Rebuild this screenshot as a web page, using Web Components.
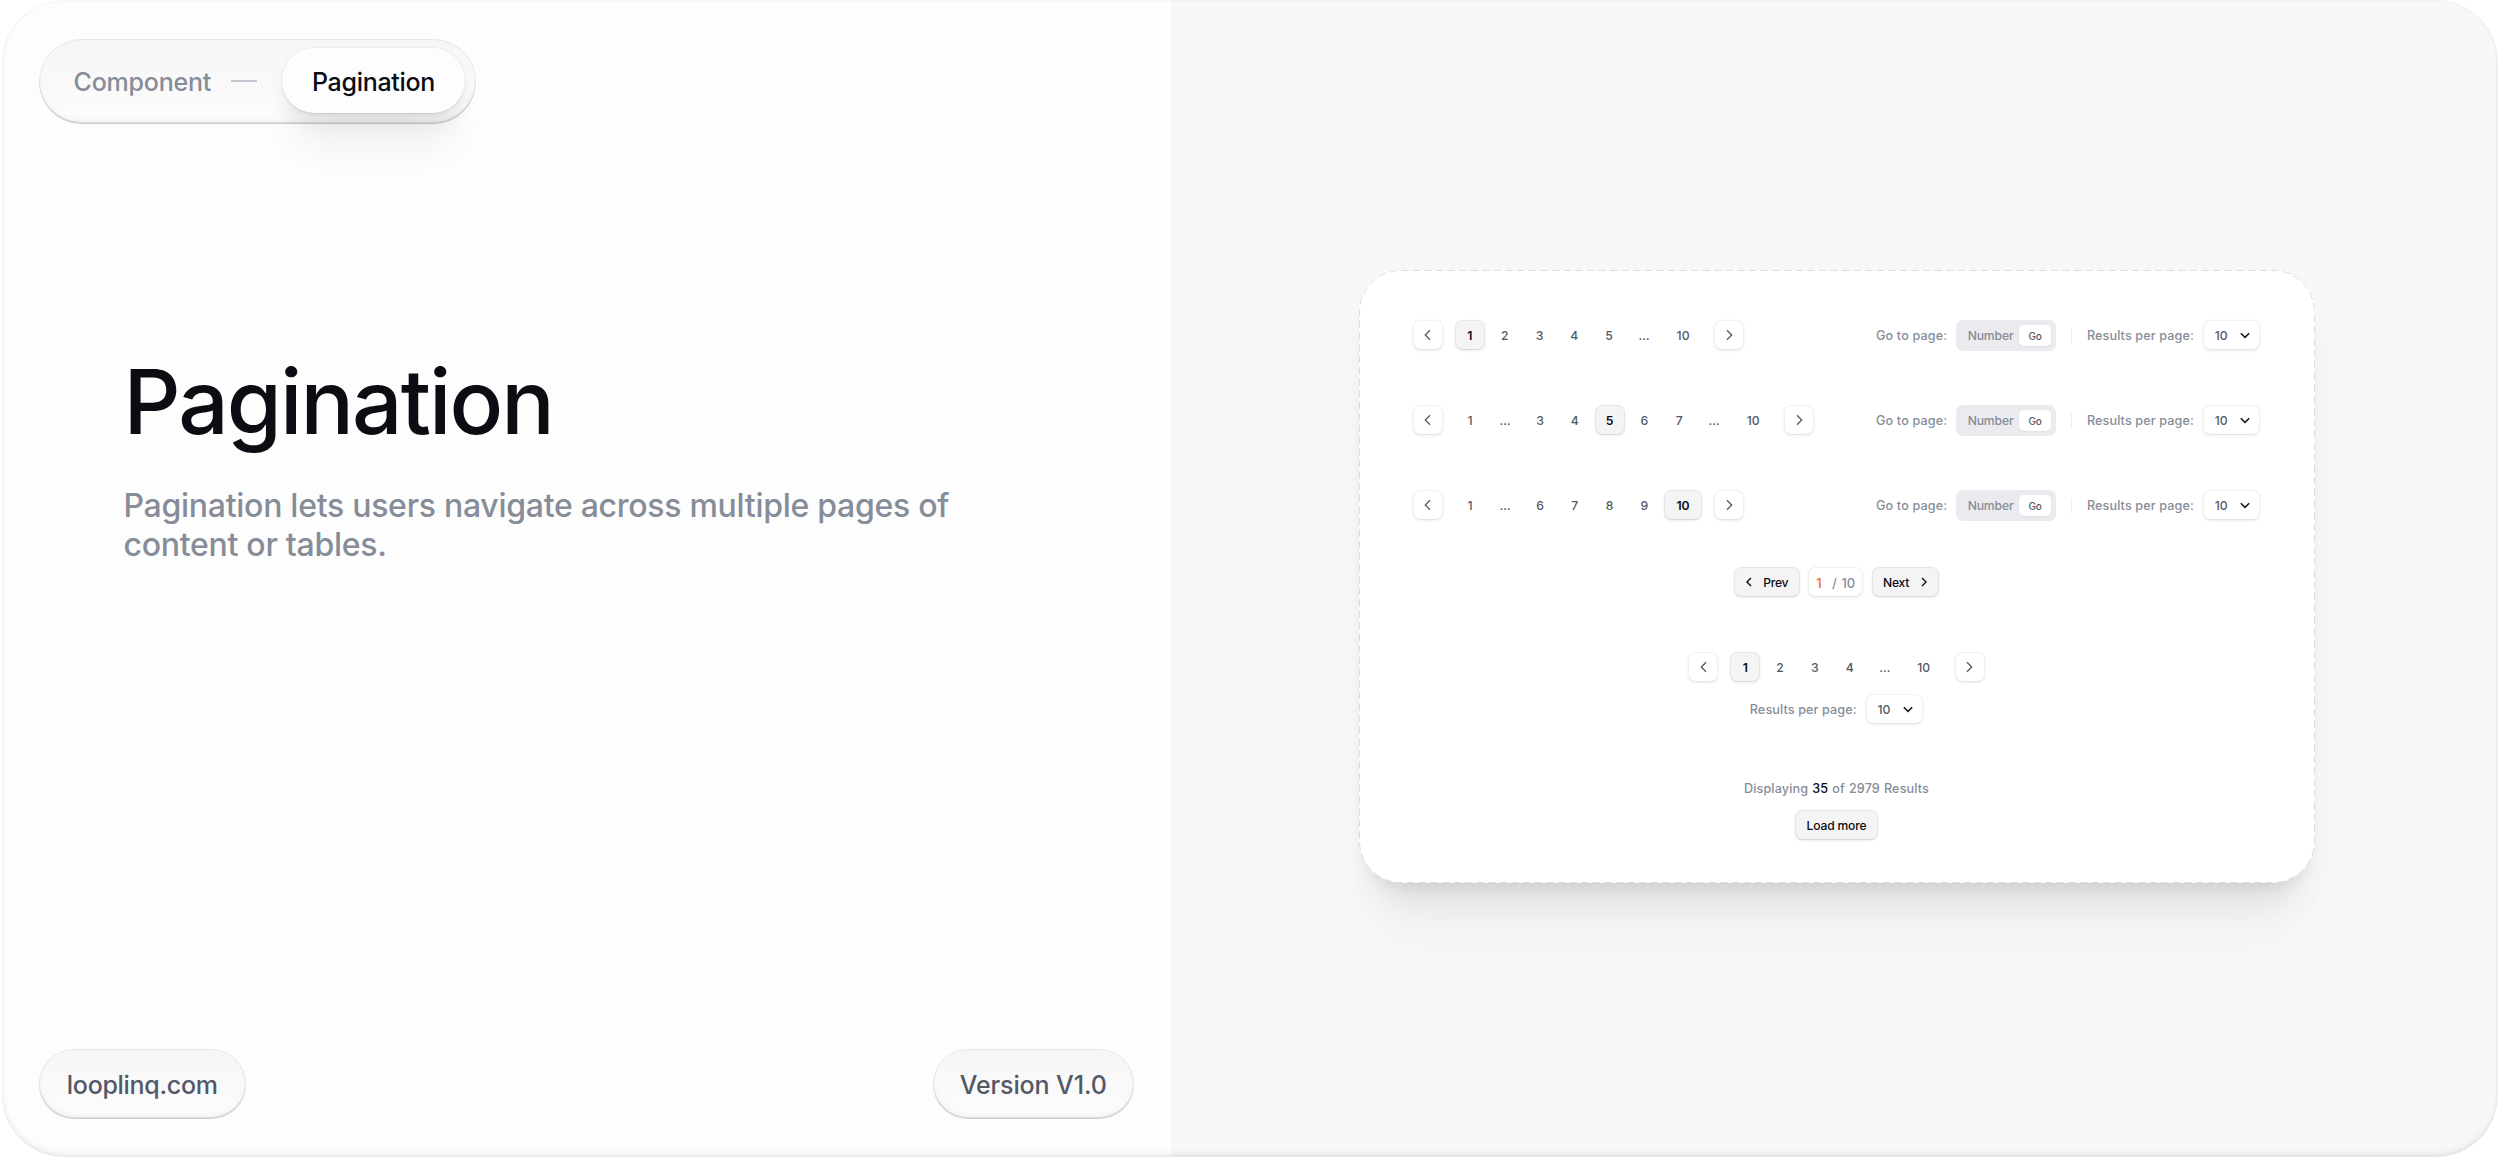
<!DOCTYPE html>
<html lang="en">
<head>
<meta charset="utf-8">
<title>Pagination</title>
<style>
    html, body {
        margin: 0;
        height: 100%;
        background: #fff;
    }
    body {
        font-family: Inter, "Liberation Sans", sans-serif;
        font-weight: 500;
        overflow: hidden;
    }
</style>
</head>
<body>
<doc-cover>
    <doc-intro slot="intro">
        <crumb-pill slot="top">
            <span slot="parent">Component</span>
            <span slot="current">Pagination</span>
        </crumb-pill>
        <span slot="title">Pagination</span>
        <span slot="text">Pagination lets users navigate across multiple pages of content or tables.</span>
        <soft-pill slot="bottom" style="--w: 206.5px; --ls: -0.3px">looplinq.com</soft-pill>
        <soft-pill slot="bottom" style="--w: 201.5px; --ls: -0.1px">Version V1.0</soft-pill>
    </doc-intro>
    <preview-card>
        <split-row>
            <page-nav pages="1 2 3 4 5 ... 10" current="1"></page-nav>
            <page-tools slot="end"></page-tools>
        </split-row>
        <split-row>
            <page-nav pages="1 ... 3 4 5 6 7 ... 10" current="5"></page-nav>
            <page-tools slot="end"></page-tools>
        </split-row>
        <split-row>
            <page-nav pages="1 ... 6 7 8 9 10" current="10"></page-nav>
            <page-tools slot="end"></page-tools>
        </split-row>
        <step-nav current="1" total="10"></step-nav>
        <page-nav class="centered" pages="1 2 3 4 ... 10" current="1"></page-nav>
        <per-page class="below"></per-page>
        <load-more shown="35" total="2979"></load-more>
    </preview-card>
</doc-cover>

<script>
// attaches an open shadow root filled with the given markup
function render(el, html) {
    const template = document.createElement('template');
    template.innerHTML = html;
    el.attachShadow({ mode: 'open' });
    el.shadowRoot.appendChild(template.content.cloneNode(true));
}

class DocCover extends HTMLElement {
    constructor() {
        super();
        render(this, `
            <style>
                :host {
                    display: block;
                    box-sizing: border-box;
                    width: 2500px;
                    height: 1159px;
                    padding: 0 2px 2px;
                }
                .frame {
                    position: relative;
                    display: grid;
                    grid-template-columns: 1169px 1fr;
                    height: 1157px;
                    border-radius: 62px;
                    overflow: hidden;
                    background: #f7f7f8;
                }
                /* the rim shading lies over both halves */
                .frame::after {
                    content: "";
                    position: absolute;
                    inset: 0;
                    border-radius: inherit;
                    box-shadow: inset 0 0 3px rgba(0, 0, 0, 0.07), inset 0 -4px 6px -1px rgba(0, 0, 0, 0.08);
                    pointer-events: none;
                }
                .stage {
                    display: flex;
                    align-items: flex-start;
                    padding: 270px 0 0 187.5px;
                }
            </style>
            <div class="frame">
                <slot name="intro"></slot>
                <div class="stage"><slot></slot></div>
            </div>
        `);
    }
}

class DocIntro extends HTMLElement {
    constructor() {
        super();
        render(this, `
            <style>
                :host {
                    display: flex;
                    flex-direction: column;
                    box-sizing: border-box;
                    height: 1157px;
                    padding: 39px 37px 38px;
                    background: #fdfdfd;
                }
                .top {
                    display: flex;
                }
                .copy {
                    flex: 1;
                    padding: 224px 0 0 84.5px;
                }
                h1 {
                    margin: 0;
                    color: #0b0d12;
                    font-size: 89px;
                    line-height: 108px;
                    font-weight: 500;
                    letter-spacing: -1.95px;
                }
                p {
                    margin: 31px 0 0;
                    width: 860px;
                    color: #868c98;
                    font-size: 32px;
                    line-height: 38.5px;
                    font-weight: 450;
                    letter-spacing: -0.28px;
                }
                .bottom {
                    display: flex;
                    justify-content: space-between;
                }
            </style>
            <div class="top"><slot name="top"></slot></div>
            <div class="copy">
                <h1><slot name="title"></slot></h1>
                <p><slot name="text"></slot></p>
            </div>
            <div class="bottom"><slot name="bottom"></slot></div>
        `);
    }
}

const PILL = `
    background: linear-gradient(#f6f6f7, #fcfcfc);
    box-shadow: inset 0 0 0 1px rgba(0, 0, 0, 0.06), inset 0 -2px 1px rgba(0, 0, 0, 0.1), inset 0 -5px 6px -2px rgba(0, 0, 0, 0.05);
`;

class CrumbPill extends HTMLElement {
    constructor() {
        super();
        render(this, `
            <style>
                :host {
                    display: flex;
                    align-items: center;
                    box-sizing: border-box;
                    width: 437px;
                    height: 85px;
                    padding: 0 11px 0 34.5px;
                    border-radius: 43px;
                    font-size: 25px;
                    ${PILL}
                }
                .parent {
                    width: 157.5px;
                    padding-top: 1px;
                    color: #868c98;
                    letter-spacing: -0.2px;
                }
                .dash {
                    width: 26px;
                    height: 2px;
                    margin-bottom: 1px;
                    background: #c3c8d0;
                }
                .current {
                    display: flex;
                    align-items: center;
                    justify-content: center;
                    box-sizing: border-box;
                    width: 183px;
                    height: 65px;
                    padding-top: 2px;
                    margin-left: auto;
                    margin-bottom: 2px;
                    border-radius: 33px;
                    background: #fdfdfd;
                    color: #0b0d12;
                    letter-spacing: -0.3px;
                    box-shadow: 0 0 0 1px rgba(0, 0, 0, 0.04), 0 3px 4px -1px rgba(0, 0, 0, 0.06), 0 14px 20px -4px rgba(0, 0, 0, 0.08), 0 44px 36px -10px rgba(0, 0, 0, 0.05);
                }
            </style>
            <span class="parent"><slot name="parent"></slot></span>
            <span class="dash"></span>
            <span class="current"><slot name="current"></slot></span>
        `);
    }
}

class SoftPill extends HTMLElement {
    constructor() {
        super();
        render(this, `
            <style>
                :host {
                    display: flex;
                    align-items: center;
                    justify-content: center;
                    box-sizing: border-box;
                    width: var(--w);
                    height: 70px;
                    padding-top: 1px;
                    border-radius: 35px;
                    color: #525866;
                    font-size: 25px;
                    letter-spacing: var(--ls);
                    ${PILL}
                }
            </style>
            <slot></slot>
        `);
    }
}

class PreviewCard extends HTMLElement {
    constructor() {
        super();
        render(this, `
            <style>
                :host {
                    position: relative;
                    display: flex;
                    flex-direction: column;
                    box-sizing: border-box;
                    width: 956px;
                    height: 613px;
                    padding: 50.4px 54.1px 0;
                    border-radius: 42px;
                    background: #fff;
                    color: #525866;
                    font-size: 12px;
                    box-shadow: 0 12px 16px -10px rgba(0, 0, 0, 0.09), 0 30px 36px -16px rgba(0, 0, 0, 0.09), 0 70px 50px -24px rgba(0, 0, 0, 0.03);
                }
                .outline {
                    position: absolute;
                    inset: 0;
                    fill: none;
                    stroke: #dcdddf;
                    stroke-dasharray: 7.6 4;
                }
                ::slotted(split-row) {
                    margin-bottom: 54.8px;
                }
                ::slotted(step-nav) {
                    margin: -7.9px 0 54.8px;
                }
                ::slotted(.centered) {
                    align-self: center;
                }
                ::slotted(.below) {
                    align-self: center;
                    margin-top: 11.8px;
                }
                ::slotted(load-more) {
                    margin-top: 55px;
                }
            </style>
            <svg class="outline" width="956" height="613">
                <rect x="0.5" y="0.5" width="955" height="612" rx="41.5"></rect>
            </svg>
            <slot></slot>
        `);
    }
}

class SplitRow extends HTMLElement {
    constructor() {
        super();
        render(this, `
            <style>
                :host {
                    display: flex;
                    justify-content: space-between;
                    height: 30.1px;
                }
            </style>
            <slot></slot>
            <slot name="end"></slot>
        `);
    }
}

const BOX = `
    border-radius: 7.5px;
    background: #fff;
    box-shadow: inset 0 0 0 1px rgba(0, 0, 0, 0.055), inset 0 -1px 0 rgba(0, 0, 0, 0.05), 0 1px 3px rgba(0, 0, 0, 0.07);
`;
const BOX_FILLED = `
    border-radius: 7.5px;
    background: #f4f4f4;
    color: #0b0d12;
    box-shadow: inset 0 0 0 1px rgba(0, 0, 0, 0.055), inset 0 -1px 0 rgba(0, 0, 0, 0.05), 0 1px 3px rgba(0, 0, 0, 0.07);
`;

const arrow = (dir) => `
    <svg width="7" height="12" viewBox="0 0 7 12" fill="none" stroke="currentColor" stroke-width="1.3">
        <path d="${dir === 'left' ? 'M6 1.3 L1.3 6 L6 10.7' : 'M1 1.3 L5.7 6 L1 10.7'}"></path>
    </svg>`;

const smallArrow = (dir) => `
    <svg width="6" height="10" viewBox="0 0 6 10" fill="none" stroke="currentColor" stroke-width="1.4">
        <path d="${dir === 'left' ? 'M5 0.9 L0.9 5 L5 9.1' : 'M1 0.9 L5.1 5 L1 9.1'}"></path>
    </svg>`;

class PageNav extends HTMLElement {
    constructor() {
        super();
        const current = this.getAttribute('current');
        const cells = this.getAttribute('pages').split(' ').map((page) => {
            if (page === '...') return '<span class="cell gap">…</span>';
            const cls = (page === current ? ' on' : '') + (page.length > 1 ? ' wide' : '');
            return `<span class="cell${cls}">${page}</span>`;
        }).join('');
        render(this, `
            <style>
                :host {
                    display: flex;
                    gap: 12.2px;
                    height: 30.1px;
                    font-size: 12.2px;
                }
                .step, .cell {
                    display: flex;
                    align-items: center;
                    justify-content: center;
                    box-sizing: border-box;
                    width: 30.1px;
                    height: 30.1px;
                }
                .step {
                    ${BOX}
                }
                .cell {
                    padding-top: 1px;
                }
                .pages {
                    display: flex;
                    gap: 4.7px;
                }
                .gap {
                    width: 30.6px;
                }
                .wide {
                    width: 38px;
                }
                .on {
                    font-weight: 600;
                    ${BOX_FILLED}
                }
            </style>
            <span class="step">${arrow('left')}</span>
            <div class="pages">${cells}</div>
            <span class="step">${arrow('right')}</span>
        `);
    }
}

class PageTools extends HTMLElement {
    constructor() {
        super();
        render(this, `
            <style>
                :host {
                    display: flex;
                    align-items: center;
                    height: 30.1px;
                    color: #868c98;
                    font-size: 12.6px;
                    font-weight: 450;
                }
                .label {
                    width: 80px;
                    padding-top: 1px;
                    letter-spacing: 0.15px;
                    white-space: nowrap;
                }
                .field {
                    display: flex;
                    align-items: center;
                    justify-content: space-between;
                    box-sizing: border-box;
                    width: 99.7px;
                    height: 30.6px;
                    padding: 0 4.7px 0 11.6px;
                    border-radius: 7px;
                    background: #ebebef;
                    font-size: 12.2px;
                    font-weight: 500;
                    letter-spacing: -0.15px;
                }
                .field > span:first-child {
                    padding-top: 1px;
                }
                .go {
                    display: flex;
                    align-items: center;
                    justify-content: center;
                    box-sizing: border-box;
                    width: 32px;
                    height: 21px;
                    padding-top: 1px;
                    border-radius: 5px;
                    background: #fff;
                    color: #525866;
                    font-size: 10px;
                    box-shadow: 0 1px 2px rgba(0, 0, 0, 0.05);
                }
                .rule {
                    width: 1px;
                    height: 15px;
                    margin: 0 15px 0 15.2px;
                    background: #eeeef0;
                }
            </style>
            <span class="label">Go to page:</span>
            <div class="field"><span>Number</span><span class="go">Go</span></div>
            <span class="rule"></span>
            <per-page></per-page>
        `);
    }
}

class PerPage extends HTMLElement {
    constructor() {
        super();
        render(this, `
            <style>
                :host {
                    display: flex;
                    align-items: center;
                    height: 30.1px;
                    color: #868c98;
                    font-size: 12.6px;
                    font-weight: 450;
                }
                .label {
                    width: 116.5px;
                    padding-top: 1px;
                    letter-spacing: 0.12px;
                    white-space: nowrap;
                }
                .select {
                    display: flex;
                    align-items: center;
                    justify-content: space-between;
                    box-sizing: border-box;
                    width: 57px;
                    height: 30.1px;
                    padding: 1px 10px 0 11.3px;
                    color: #525866;
                    font-size: 12.2px;
                    font-weight: 500;
                    ${BOX}
                }
            </style>
            <span class="label">Results per page:</span>
            <div class="select">
                <span>10</span>
                <svg width="10" height="7" viewBox="0 0 10 7" fill="none" stroke="#15171c" stroke-width="1.5">
                    <path d="M0.8 1.2 L5 5.4 L9.2 1.2"></path>
                </svg>
            </div>
        `);
    }
}

class StepNav extends HTMLElement {
    constructor() {
        super();
        render(this, `
            <style>
                :host {
                    display: flex;
                    justify-content: center;
                    gap: 8.4px;
                    height: 30.1px;
                }
                .btn, .count {
                    display: flex;
                    align-items: center;
                    justify-content: space-between;
                    box-sizing: border-box;
                    height: 30.1px;
                }
                .btn {
                    font-weight: 550;
                    font-size: 12.1px;
                    letter-spacing: -0.2px;
                    ${BOX_FILLED}
                }
                .btn span {
                    padding-top: 1px;
                }
                .prev {
                    width: 65.7px;
                    padding: 0 11.5px 0 11.5px;
                }
                .next {
                    width: 67.2px;
                    padding: 0 11.5px 0 11.3px;
                }
                .count {
                    width: 55px;
                    padding: 1px 8px 0 8px;
                    color: #868c98;
                    font-size: 13px;
                    font-weight: 450;
                    word-spacing: 1.2px;
                    ${BOX}
                }
                b {
                    color: #fa6414;
                    font-weight: 550;
                }
            </style>
            <span class="btn prev">${smallArrow('left')}<span>Prev</span></span>
            <span class="count"><b>${this.getAttribute('current')}</b><span>/ ${this.getAttribute('total')}</span></span>
            <span class="btn next"><span>Next</span>${smallArrow('right')}</span>
        `);
    }
}

class LoadMore extends HTMLElement {
    constructor() {
        super();
        render(this, `
            <style>
                :host {
                    display: flex;
                    flex-direction: column;
                    align-items: center;
                    gap: 11.6px;
                }
                p {
                    margin: 0;
                    color: #868c98;
                    font-size: 12.6px;
                    font-weight: 450;
                    line-height: 19px;
                    word-spacing: 0.6px;
                    letter-spacing: 0.13px;
                }
                b {
                    color: #0b0d12;
                    font-weight: 550;
                }
                .btn {
                    display: flex;
                    align-items: center;
                    justify-content: center;
                    box-sizing: border-box;
                    width: 83.3px;
                    height: 30.1px;
                    padding-top: 1px;
                    font-weight: 550;
                    font-size: 12.1px;
                    letter-spacing: -0.15px;
                    ${BOX_FILLED}
                }
            </style>
            <p>Displaying <b>${this.getAttribute('shown')}</b> of ${this.getAttribute('total')} Results</p>
            <span class="btn">Load more</span>
        `);
    }
}

customElements.define('doc-cover', DocCover);
customElements.define('doc-intro', DocIntro);
customElements.define('crumb-pill', CrumbPill);
customElements.define('soft-pill', SoftPill);
customElements.define('preview-card', PreviewCard);
customElements.define('split-row', SplitRow);
customElements.define('page-nav', PageNav);
customElements.define('per-page', PerPage);
customElements.define('page-tools', PageTools);
customElements.define('step-nav', StepNav);
customElements.define('load-more', LoadMore);
</script>
</body>
</html>
